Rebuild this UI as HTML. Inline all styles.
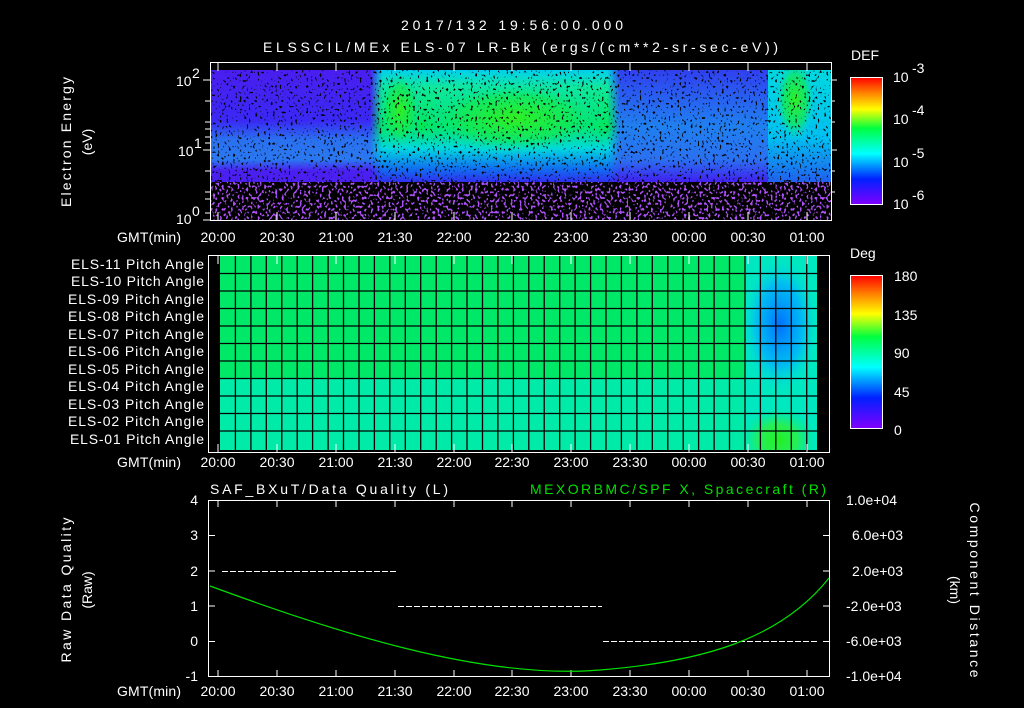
<!DOCTYPE html>
<html><head><meta charset="utf-8"><style>
html,body{margin:0;padding:0;background:#000;width:1024px;height:708px;overflow:hidden}
svg text{font-family:"Liberation Sans",sans-serif;fill:#fff;font-size:14px}
</style></head><body>
<svg width="1024" height="708" viewBox="0 0 1024 708" xmlns="http://www.w3.org/2000/svg">
<defs>
<linearGradient id="def" x1="0" y1="1" x2="0" y2="0">
<stop offset="0" stop-color="#8000ff"/><stop offset="0.2" stop-color="#0020ff"/><stop offset="0.4" stop-color="#00ffff"/><stop offset="0.6" stop-color="#00ff40"/><stop offset="0.75" stop-color="#ffff00"/><stop offset="0.88" stop-color="#ff8000"/><stop offset="1" stop-color="#ff0000"/>
</linearGradient>
<linearGradient id="vleft" x1="0" y1="0" x2="0" y2="1">
<stop offset="0" stop-color="#4a1ef0"/><stop offset="0.45" stop-color="#3a28f4"/><stop offset="0.62" stop-color="#2a70f0"/><stop offset="0.8" stop-color="#2a78f0"/><stop offset="0.9" stop-color="#4a20f0"/><stop offset="1" stop-color="#4a20f0"/>
</linearGradient>
<linearGradient id="vmid" x1="0" y1="0" x2="0" y2="1">
<stop offset="0" stop-color="#00d0f0"/><stop offset="0.15" stop-color="#10e8a0"/><stop offset="0.5" stop-color="#00e850"/><stop offset="0.7" stop-color="#00d8e0"/><stop offset="0.88" stop-color="#1070f0"/><stop offset="1" stop-color="#3030f0"/>
</linearGradient>
<linearGradient id="vright" x1="0" y1="0" x2="0" y2="1">
<stop offset="0" stop-color="#3040f0"/><stop offset="0.5" stop-color="#2080f0"/><stop offset="0.8" stop-color="#2a70f0"/><stop offset="1" stop-color="#4020f0"/>
</linearGradient>
<linearGradient id="vfar" x1="0" y1="0" x2="0" y2="1">
<stop offset="0" stop-color="#00d8e0"/><stop offset="0.6" stop-color="#00c0f0"/><stop offset="1" stop-color="#2060f0"/>
</linearGradient>
<linearGradient id="hfade" x1="0" y1="0" x2="1" y2="0">
<stop offset="0" stop-color="#fff" stop-opacity="0"/><stop offset="0.05" stop-color="#fff" stop-opacity="1"/><stop offset="0.95" stop-color="#fff" stop-opacity="1"/><stop offset="1" stop-color="#fff" stop-opacity="0"/>
</linearGradient>
<mask id="mfade"><rect x="370" y="70" width="250" height="112" fill="url(#hfade)"/></mask>
<radialGradient id="gblob" cx="0.5" cy="0.5" r="0.5">
<stop offset="0" stop-color="#30f020"/><stop offset="0.6" stop-color="#10e860" stop-opacity="0.8"/><stop offset="1" stop-color="#00d8e0" stop-opacity="0"/>
</radialGradient>
<radialGradient id="bblob" cx="0.5" cy="0.5" r="0.5">
<stop offset="0" stop-color="#0070ff"/><stop offset="0.6" stop-color="#00b0ff" stop-opacity="0.8"/><stop offset="1" stop-color="#00e0e0" stop-opacity="0"/>
</radialGradient>
<radialGradient id="lblob" cx="0.5" cy="0.5" r="0.5">
<stop offset="0" stop-color="#20f020"/><stop offset="0.5" stop-color="#30f040" stop-opacity="0.8"/><stop offset="1" stop-color="#00ea90" stop-opacity="0"/>
</radialGradient>
<filter id="spk" x="0" y="0" width="1" height="1">
<feTurbulence type="fractalNoise" baseFrequency="0.45 0.35" numOctaves="1" seed="3" result="n"/>
<feColorMatrix in="n" type="matrix" values="0 0 0 0 0.42  0 0 0 0 0.08  0 0 0 0 0.95  0 0 0 12 -6.6"/>
</filter>
<filter id="blk" x="0" y="0" width="1" height="1">
<feTurbulence type="fractalNoise" baseFrequency="0.45 0.35" numOctaves="1" seed="9" result="n"/>
<feColorMatrix in="n" type="matrix" values="0 0 0 0 0  0 0 0 0 0  0 0 0 0 0  0 0 0 12 -7.4"/>
</filter>
<clipPath id="sp"><rect x="211" y="70" width="620" height="150"/></clipPath>
<clipPath id="pc"><rect x="220" y="256" width="597" height="194"/></clipPath>
</defs>

<text x="512" y="30" text-anchor="middle" font-size="16" textLength="222">2017/132 19:56:00.000</text>
<text x="263" y="52" font-size="16" textLength="515">ELSSCIL/MEx ELS-07 LR-Bk  (ergs/(cm**2-sr-sec-eV))</text>

<!-- spectrogram -->
<g clip-path="url(#sp)">
<rect x="211" y="70" width="620" height="150" fill="#000"/>
<rect x="211" y="70" width="620" height="112" fill="url(#vleft)"/>
<rect x="610" y="70" width="160" height="112" fill="url(#vright)"/>
<rect x="370" y="70" width="250" height="112" fill="url(#vmid)" mask="url(#mfade)"/>
<ellipse cx="400" cy="110" rx="22" ry="40" fill="url(#gblob)"/>
<ellipse cx="515" cy="118" rx="95" ry="38" fill="url(#gblob)"/>
<rect x="768" y="70" width="63" height="112" fill="url(#vfar)"/>
<ellipse cx="795" cy="100" rx="20" ry="42" fill="url(#gblob)"/>
<rect x="211" y="70" width="620" height="112" filter="url(#blk)"/>
<rect x="211" y="182" width="620" height="38" filter="url(#spk)"/>
</g>
<rect x="210.5" y="62.5" width="621" height="158" fill="none" stroke="#fff"/>
<g stroke="#fff">
<path d="M203 80h7M203 150h7M203 220h7M205 101h5M205 122h5M205 129h5M205 137h5M205 143h5M205 171h5M205 192h5M205 199h5M205 213h5M831 80h6M831 150h6M831 101h4M831 122h4M831 171h4M831 192h4"/>
<path d="M218 63v8M277 63v8M336 63v8M395 63v8M454 63v8M512 63v8M571 63v8M630 63v8M689 63v8M748 63v8M807 63v8M218 220v-8M277 220v-8M336 220v-8M395 220v-8M454 220v-8M512 220v-8M571 220v-8M630 220v-8M689 220v-8M748 220v-8M807 220v-8" />
</g>
<text x="176" y="86" font-size="15">10</text><text x="192" y="78" font-size="10">2</text>
<text x="178" y="156" font-size="15">10</text><text x="194" y="148" font-size="10">1</text>
<text x="176" y="224" font-size="15">10</text><text x="192" y="216" font-size="10">0</text>
<text transform="translate(71,142) rotate(-90)" text-anchor="middle" font-size="15" textLength="130">Electron Energy</text>
<text transform="translate(92,142) rotate(-90)" text-anchor="middle" font-size="15">(eV)</text>

<g font-size="14">
<text x="117" y="242" textLength="64">GMT(min)</text>
<text x="218" y="242" text-anchor="middle">20:00</text><text x="277" y="242" text-anchor="middle">20:30</text><text x="336" y="242" text-anchor="middle">21:00</text><text x="395" y="242" text-anchor="middle">21:30</text><text x="454" y="242" text-anchor="middle">22:00</text><text x="512" y="242" text-anchor="middle">22:30</text><text x="571" y="242" text-anchor="middle">23:00</text><text x="630" y="242" text-anchor="middle">23:30</text><text x="689" y="242" text-anchor="middle">00:00</text><text x="748" y="242" text-anchor="middle">00:30</text><text x="807" y="242" text-anchor="middle">01:00</text>
</g>

<!-- DEF bar -->
<text x="851" y="60" font-size="16">DEF</text>
<rect x="850.5" y="77.5" width="32" height="127" fill="url(#def)" stroke="#fff"/>
<text x="893" y="82" font-size="16">10</text><text x="912" y="73" font-size="10">-3</text>
<text x="893" y="124" font-size="16">10</text><text x="912" y="115" font-size="10">-4</text>
<text x="893" y="167" font-size="16">10</text><text x="912" y="158" font-size="10">-5</text>
<text x="893" y="209" font-size="16">10</text><text x="912" y="200" font-size="10">-6</text>

<!-- pitch panel -->
<rect x="208" y="255" width="622" height="197" fill="#000"/>
<g clip-path="url(#pc)">
<rect x="220" y="256" width="597" height="124" fill="#00e868"/>
<rect x="220" y="378" width="597" height="72" fill="#00eaa8"/>
<rect x="745" y="256" width="72" height="194" fill="#00e8c0"/>
<ellipse cx="780" cy="325" rx="38" ry="68" fill="url(#bblob)"/>
<ellipse cx="778" cy="440" rx="38" ry="32" fill="url(#lblob)"/>
</g>
<g stroke="#000" stroke-width="1.3">
<path d="M220 273.5h597M220 291h597M220 308.5h597M220 326h597M220 343.5h597M220 361h597M220 378.5h597M220 396h597M220 413.5h597M220 431h597"/>
<path d="M235.4 256v194M250.9 256v194M266.3 256v194M281.8 256v194M297.2 256v194M312.6 256v194M328.1 256v194M343.5 256v194M359 256v194M374.4 256v194M389.8 256v194M405.3 256v194M420.7 256v194M436.2 256v194M451.6 256v194M467 256v194M482.5 256v194M497.9 256v194M513.4 256v194M528.8 256v194M544.2 256v194M559.7 256v194M575.1 256v194M590.6 256v194M606 256v194M621.4 256v194M636.9 256v194M652.3 256v194M667.8 256v194M683.2 256v194M698.6 256v194M714.1 256v194M729.5 256v194M745 256v194M760.4 256v194M775.8 256v194M791.3 256v194M806.7 256v194"/>
</g>
<rect x="208.5" y="255.5" width="621" height="197" fill="none" stroke="#fff"/>
<g stroke="#fff"><path d="M218 256v8M277 256v8M336 256v8M395 256v8M454 256v8M512 256v8M571 256v8M630 256v8M689 256v8M748 256v8M807 256v8M218 452v-8M277 452v-8M336 452v-8M395 452v-8M454 452v-8M512 452v-8M571 452v-8M630 452v-8M689 452v-8M748 452v-8M807 452v-8"/></g>
<g font-size="12">
<text x="71" y="269" textLength="133">ELS-11 Pitch Angle</text>
<text x="71" y="286" textLength="133">ELS-10 Pitch Angle</text>
<text x="68" y="304" textLength="136">ELS-09 Pitch Angle</text>
<text x="68" y="321" textLength="136">ELS-08 Pitch Angle</text>
<text x="68" y="339" textLength="136">ELS-07 Pitch Angle</text>
<text x="68" y="356" textLength="136">ELS-06 Pitch Angle</text>
<text x="68" y="374" textLength="136">ELS-05 Pitch Angle</text>
<text x="68" y="391" textLength="136">ELS-04 Pitch Angle</text>
<text x="68" y="409" textLength="136">ELS-03 Pitch Angle</text>
<text x="68" y="426" textLength="136">ELS-02 Pitch Angle</text>
<text x="70" y="444" textLength="134">ELS-01 Pitch Angle</text>
</g>
<g font-size="14">
<text x="117" y="467" textLength="64">GMT(min)</text>
<text x="218" y="467" text-anchor="middle">20:00</text><text x="277" y="467" text-anchor="middle">20:30</text><text x="336" y="467" text-anchor="middle">21:00</text><text x="395" y="467" text-anchor="middle">21:30</text><text x="454" y="467" text-anchor="middle">22:00</text><text x="512" y="467" text-anchor="middle">22:30</text><text x="571" y="467" text-anchor="middle">23:00</text><text x="630" y="467" text-anchor="middle">23:30</text><text x="689" y="467" text-anchor="middle">00:00</text><text x="748" y="467" text-anchor="middle">00:30</text><text x="807" y="467" text-anchor="middle">01:00</text>
</g>
<text x="850" y="258" font-size="16">Deg</text>
<rect x="850.5" y="275.5" width="32" height="153" fill="url(#def)" stroke="#fff"/>
<g font-size="16"><text x="894" y="281">180</text><text x="894" y="320">135</text><text x="894" y="358">90</text><text x="894" y="397">45</text><text x="894" y="435">0</text></g>

<!-- bottom panel -->
<text x="210" y="494" font-size="15" textLength="238">SAF_BXuT/Data Quality (L)</text>
<text x="530" y="494" font-size="15" textLength="296" style="fill:#00e000">MEXORBMC/SPF X, Spacecraft (R)</text>
<rect x="208.5" y="500.5" width="621" height="176" fill="none" stroke="#fff"/>
<g stroke="#fff">
<path d="M209 535.5h6M209 571h6M209 606h6M209 641.5h6M829 535.5h-6M829 571h-6M829 606h-6M829 641.5h-6"/>
<path d="M218 501v6M277 501v6M336 501v6M395 501v6M454 501v6M512 501v6M571 501v6M630 501v6M689 501v6M748 501v6M807 501v6M218 676v-6M277 676v-6M336 676v-6M395 676v-6M454 676v-6M512 676v-6M571 676v-6M630 676v-6M689 676v-6M748 676v-6M807 676v-6"/>
<path d="M222 571.5H396M398 606.5H602M603 641.5H817" stroke-dasharray="6 2"/>
</g>
<path d="M210 586 C 330 630, 480 680, 600 670 C 700 662, 780 640, 829 578" fill="none" stroke="#00e000" stroke-width="1.2"/>
<g font-size="14" text-anchor="end">
<text x="198" y="505">4</text><text x="198" y="540">3</text><text x="198" y="576">2</text><text x="198" y="611">1</text><text x="198" y="646">0</text><text x="198" y="681">-1</text>
</g>
<g font-size="13">
<text x="846" y="505">1.0e+04</text><text x="852" y="540">6.0e+03</text><text x="852" y="576">2.0e+03</text><text x="846" y="611">-2.0e+03</text><text x="846" y="646">-6.0e+03</text><text x="846" y="681">-1.0e+04</text>
</g>
<text transform="translate(71,590) rotate(-90)" text-anchor="middle" font-size="15" textLength="145">Raw Data Quality</text>
<text transform="translate(92,590) rotate(-90)" text-anchor="middle" font-size="15">(Raw)</text>
<text transform="translate(970,590) rotate(90)" text-anchor="middle" font-size="15" textLength="175">Component Distance</text>
<text transform="translate(950,590) rotate(90)" text-anchor="middle" font-size="15">(km)</text>
<g font-size="14">
<text x="117" y="696" textLength="64">GMT(min)</text>
<text x="218" y="696" text-anchor="middle">20:00</text><text x="277" y="696" text-anchor="middle">20:30</text><text x="336" y="696" text-anchor="middle">21:00</text><text x="395" y="696" text-anchor="middle">21:30</text><text x="454" y="696" text-anchor="middle">22:00</text><text x="512" y="696" text-anchor="middle">22:30</text><text x="571" y="696" text-anchor="middle">23:00</text><text x="630" y="696" text-anchor="middle">23:30</text><text x="689" y="696" text-anchor="middle">00:00</text><text x="748" y="696" text-anchor="middle">00:30</text><text x="807" y="696" text-anchor="middle">01:00</text>
</g>
</svg>
</body></html>
